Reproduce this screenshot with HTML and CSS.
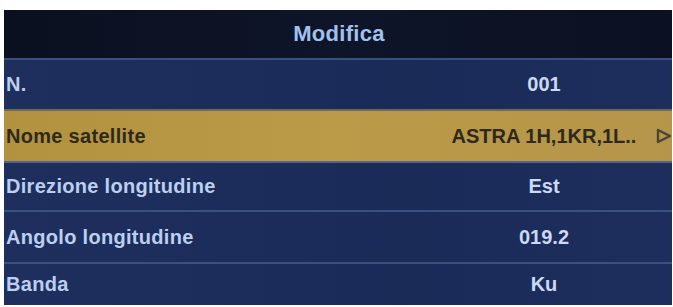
FILE: index.html
```html
<!DOCTYPE html>
<html lang="it">
<head>
<meta charset="utf-8">
<title>Modifica</title>
<link rel="stylesheet" href="styles.css">
</head>
<body>
<div class="panel">
  <div class="title">Modifica</div>
  <div class="row r1"><span class="label">N.</span><span class="value">001</span><span class="arrow"></span></div>
  <div class="row r2 selected"><span class="label">Nome satellite</span><span class="value">ASTRA 1H,1KR,1L..</span><span class="arrow"><svg width="18" height="16" viewBox="0 0 18 16"><path d="M4 2 L16 8 L4 14 Z" fill="none" stroke="#4a4433" stroke-width="2.4" stroke-linejoin="round"/></svg></span></div>
  <div class="row r3"><span class="label">Direzione longitudine</span><span class="value">Est</span><span class="arrow"></span></div>
  <div class="row r4"><span class="label">Angolo longitudine</span><span class="value">019.2</span><span class="arrow"></span></div>
  <div class="row r5"><span class="label">Banda</span><span class="value">Ku</span><span class="arrow"></span></div>
</div>
</body>
</html>
```
FILE: styles.css
```css
html, body {
  margin: 0;
  padding: 0;
  background: #ffffff;
}
body {
  width: 673px;
  height: 307px;
  overflow: hidden;
  font-family: "Liberation Sans", Arial, sans-serif;
  font-weight: bold;
}
.panel {
  margin: 10px 1px 0 4px;
  height: 295px;
  display: flex;
  flex-direction: column;
  background: #1c2c58;
}
.title {
  height: 48px;
  display: flex;
  align-items: center;
  justify-content: center;
  background: linear-gradient(90deg, #0b1020, #0e1528 50%, #0b1122);
  color: #a2c1ee;
  font-size: 22px;
  letter-spacing: 0.3px;
  padding-left: 2px;
}
.row {
  display: grid;
  grid-template-columns: 1fr 220px 18px;
  align-items: center;
  border-top: 2px solid #3a5080;
  background: linear-gradient(90deg, #1e2f5e, #1b2b58 60%, #1d2e5c);
  color: #bccff0;
  font-size: 20px;
  box-sizing: border-box;
}
.r1 { height: 51px; }
.r2 { height: 52px; }
.r3 { height: 49px; }
.r4 { height: 52px; }
.r5 { height: 43px; }
.row.selected {
  background: linear-gradient(90deg, #b3923f, #bb9a48 50%, #b5954a);
  border-top: 2px solid #6c6a5a;
  color: #2e291c;
}
.r3 { border-top: 2px solid #53648a; }
.label {
  padding-left: 2px;
  letter-spacing: 0.3px;
  white-space: nowrap;
}
.value {
  text-align: center;
  white-space: nowrap;
  color: #cbd9f4;
}
.selected .value {
  color: #2e291c;
}
.arrow {
  display: flex;
  align-items: center;
  justify-content: flex-end;
  overflow: hidden;
}
```
